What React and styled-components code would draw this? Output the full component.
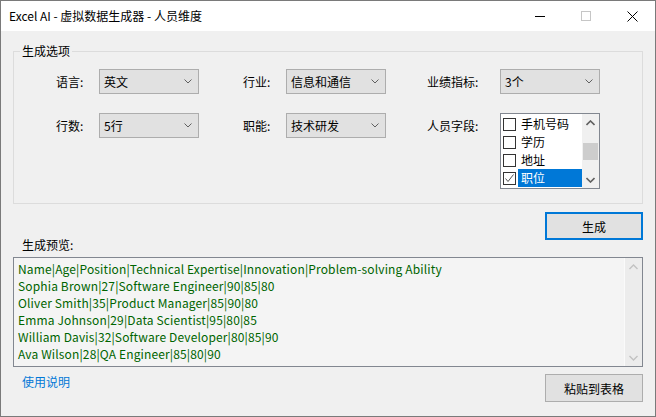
import React from 'react';
import styled, { createGlobalStyle } from 'styled-components';

const GlobalStyle = createGlobalStyle`
  body {
    margin: 0;
    background: #ffffff;
    font-family: "Noto Sans CJK SC", "Liberation Sans", sans-serif;
    font-size: 12px;
    color: #000;
  }
`

const Window = styled.div`
  width: 656px;
  height: 417px;
  box-sizing: border-box;
  border: 1px solid #7a7a7a;
  display: flex;
  flex-direction: column;
  background: #f0f0f0;
`

const TitleBar = styled.div`
  height: 30px;
  background: #ffffff;
  display: flex;
  align-items: center;
  padding-left: 8px;
`

const Title = styled.div`
  flex: 1;
  line-height: 16px;
`

const Caption = styled.div`
  width: 46px;
  height: 30px;
  display: flex;
  align-items: center;
  justify-content: center;
`

const Client = styled.div`
  flex: 1;
  display: flex;
  flex-direction: column;
  padding: 0 12px 14px 12px;
`

const Group = styled.fieldset`
  margin: 12px 0 0;
  padding: 0;
  min-width: 0;
  border: 1px solid #dcdcdc;
`

const Legend = styled.legend`
  margin-left: 6px;
  padding: 0 2px;
  line-height: 16px;
`

const OptionsGrid = styled.div`
  display: grid;
  grid-template-columns: 187px 184px 173px;
  row-gap: 19px;
  padding: 10px 0 14px 42px;
`

const Field = styled.div`
  display: flex;
  align-items: flex-start;
`

const Label = styled.div`
  width: ${p => p.$w}px;
  line-height: 25px;
  white-space: nowrap;
`

const Combo = styled.div`
  width: 100px;
  height: 25px;
  box-sizing: border-box;
  border: 1px solid #adadad;
  background: #e1e1e1;
  display: flex;
  align-items: center;
  justify-content: space-between;
  padding: 0 6px 0 4px;
`

const ListBox = styled.div`
  width: 100px;
  height: 76px;
  box-sizing: border-box;
  border: 1px solid #828790;
  background: #ffffff;
  display: flex;
  overflow: hidden;
`

const Items = styled.div`
  flex: 1;
  padding-top: 1px;
`

const Item = styled.div`
  height: 18px;
  display: flex;
  align-items: center;
`

const Check = styled.div`
  width: 13px;
  height: 13px;
  box-sizing: border-box;
  border: 1px solid #333333;
  background: #ffffff;
  margin-left: 2px;
  display: flex;
  align-items: center;
  justify-content: center;
`

const ItemText = styled.div`
  flex: 1;
  height: 18px;
  line-height: 18px;
  margin-left: 2px;
  padding-left: 3px;
  background: ${p => (p.$selected ? '#0078d7' : 'transparent')};
  color: ${p => (p.$selected ? '#ffffff' : '#000000')};
`

const ScrollBar = styled.div`
  width: 17px;
  background: ${p => (p.$disabled ? '#ececec' : '#f0f0f0')};
  border-left: ${p => (p.$disabled ? '1px solid #fafafa' : 'none')};
  display: flex;
  flex-direction: column;
  align-items: center;
`

const ScrollArrow = styled.div`
  height: 17px;
  width: 100%;
  display: flex;
  align-items: center;
  justify-content: center;
`

const Track = styled.div`
  flex: 1;
  width: 100%;
  display: flex;
  justify-content: center;
`

const Thumb = styled.div`
  width: 15px;
  height: 17px;
  margin-top: 12px;
  background: #cdcdcd;
`

const ActionRow = styled.div`
  display: flex;
  justify-content: ${p => p.$between ? 'space-between' : 'flex-end'};
  align-items: flex-start;
  margin-top: ${p => p.$top}px;
`

const Button = styled.button`
  width: 98px;
  height: 28px;
  box-sizing: border-box;
  border: ${p => (p.$default ? '2px solid #0078d7' : '1px solid #adadad')};
  background: #e1e1e1;
  font-family: inherit;
  font-size: 12px;
  color: #000;
  padding: 0;
`

const PreviewLabel = styled.div`
  margin-top: -3px;
  padding-left: 9px;
  line-height: 16px;
`

const Preview = styled.div`
  margin-top: 4px;
  height: 110px;
  box-sizing: border-box;
  border: 1px solid #828790;
  background: #f4f4f4;
  display: flex;
`

const PreviewText = styled.div`
  flex: 1;
  padding: 2px 4px;
  color: #006400;
  line-height: 17px;
  letter-spacing: 0.14px;
  white-space: pre;
`

const Link = styled.a`
  padding-left: 9px;
  line-height: 16px;
  color: #0078d7;
  text-decoration: none;
`

const Chevron = ({ up, color = '#606060', w = 1 }) => (
  <svg width="9" height="6" viewBox="0 0 9 6">
    <polyline
      points={up ? '0.5,5 4.5,1 8.5,5' : '0.5,1 4.5,5 8.5,1'}
      fill="none"
      stroke={color}
      strokeWidth={w}
    />
  </svg>
)

const Select = ({ value }) => (
  <Combo>
    <span>{value}</span>
    <svg width="8" height="5" viewBox="0 0 8 5">
      <polyline points="0.5,0.5 4,4 7.5,0.5" fill="none" stroke="#606060" strokeWidth="1" />
    </svg>
  </Combo>
)

const fields = [
  { name: '手机号码', checked: false },
  { name: '学历', checked: false },
  { name: '地址', checked: false },
  { name: '职位', checked: true },
]

const lines = [
  'Name|Age|Position|Technical Expertise|Innovation|Problem-solving Ability',
  'Sophia Brown|27|Software Engineer|90|85|80',
  'Oliver Smith|35|Product Manager|85|90|80',
  'Emma Johnson|29|Data Scientist|95|80|85',
  'William Davis|32|Software Developer|80|85|90',
  'Ava Wilson|28|QA Engineer|85|80|90',
]

const App = () => {
  return (
    <>
      <GlobalStyle />
      <Window>
        <TitleBar>
          <Title>Excel AI - 虚拟数据生成器 - 人员维度</Title>
          <Caption>
            <svg width="10" height="10" viewBox="0 0 10 10">
              <line x1="0" y1="5.5" x2="10" y2="5.5" stroke="#000" strokeWidth="1" />
            </svg>
          </Caption>
          <Caption>
            <svg width="10" height="10" viewBox="0 0 10 10">
              <rect x="0.5" y="0.5" width="9" height="9" fill="none" stroke="#c6c6c6" strokeWidth="1" />
            </svg>
          </Caption>
          <Caption>
            <svg width="11" height="11" viewBox="0 0 11 11">
              <path d="M0.5 0.5 L10.5 10.5 M10.5 0.5 L0.5 10.5" stroke="#000" strokeWidth="1" />
            </svg>
          </Caption>
        </TitleBar>
        <Client>
          <Group>
            <Legend>生成选项</Legend>
            <OptionsGrid>
              <Field>
                <Label $w={43}>语言:</Label>
                <Select value="英文" />
              </Field>
              <Field>
                <Label $w={43}>行业:</Label>
                <Select value="信息和通信" />
              </Field>
              <Field>
                <Label $w={73}>业绩指标:</Label>
                <Select value="3个" />
              </Field>
              <Field>
                <Label $w={43}>行数:</Label>
                <Select value="5行" />
              </Field>
              <Field>
                <Label $w={43}>职能:</Label>
                <Select value="技术研发" />
              </Field>
              <Field>
                <Label $w={73}>人员字段:</Label>
                <ListBox>
                  <Items>
                    {fields.map(f => (
                      <Item key={f.name}>
                        <Check>
                          {f.checked && (
                            <svg width="11" height="11" viewBox="0 0 11 11">
                              <polyline points="1.5,5.5 4,8.5 9.5,1.5" fill="none" stroke="#555" strokeWidth="1" />
                            </svg>
                          )}
                        </Check>
                        <ItemText $selected={f.checked}>{f.name}</ItemText>
                      </Item>
                    ))}
                  </Items>
                  <ScrollBar>
                    <ScrollArrow><Chevron up w={1.6} /></ScrollArrow>
                    <Track><Thumb /></Track>
                    <ScrollArrow><Chevron w={1.6} /></ScrollArrow>
                  </ScrollBar>
                </ListBox>
              </Field>
            </OptionsGrid>
          </Group>
          <ActionRow $top={8}>
            <Button $default>生成</Button>
          </ActionRow>
          <PreviewLabel>生成预览:</PreviewLabel>
          <Preview>
            <PreviewText>
              {lines.map(l => <div key={l}>{l}</div>)}
            </PreviewText>
            <ScrollBar $disabled>
              <ScrollArrow><Chevron up color="#c2c2c2" w={1.4} /></ScrollArrow>
              <Track />
              <ScrollArrow><Chevron color="#c2c2c2" w={1.4} /></ScrollArrow>
            </ScrollBar>
          </Preview>
          <ActionRow $between $top={7}>
            <Link href="#">使用说明</Link>
            <Button>粘贴到表格</Button>
          </ActionRow>
        </Client>
      </Window>
    </>
  );
}

export default App;
